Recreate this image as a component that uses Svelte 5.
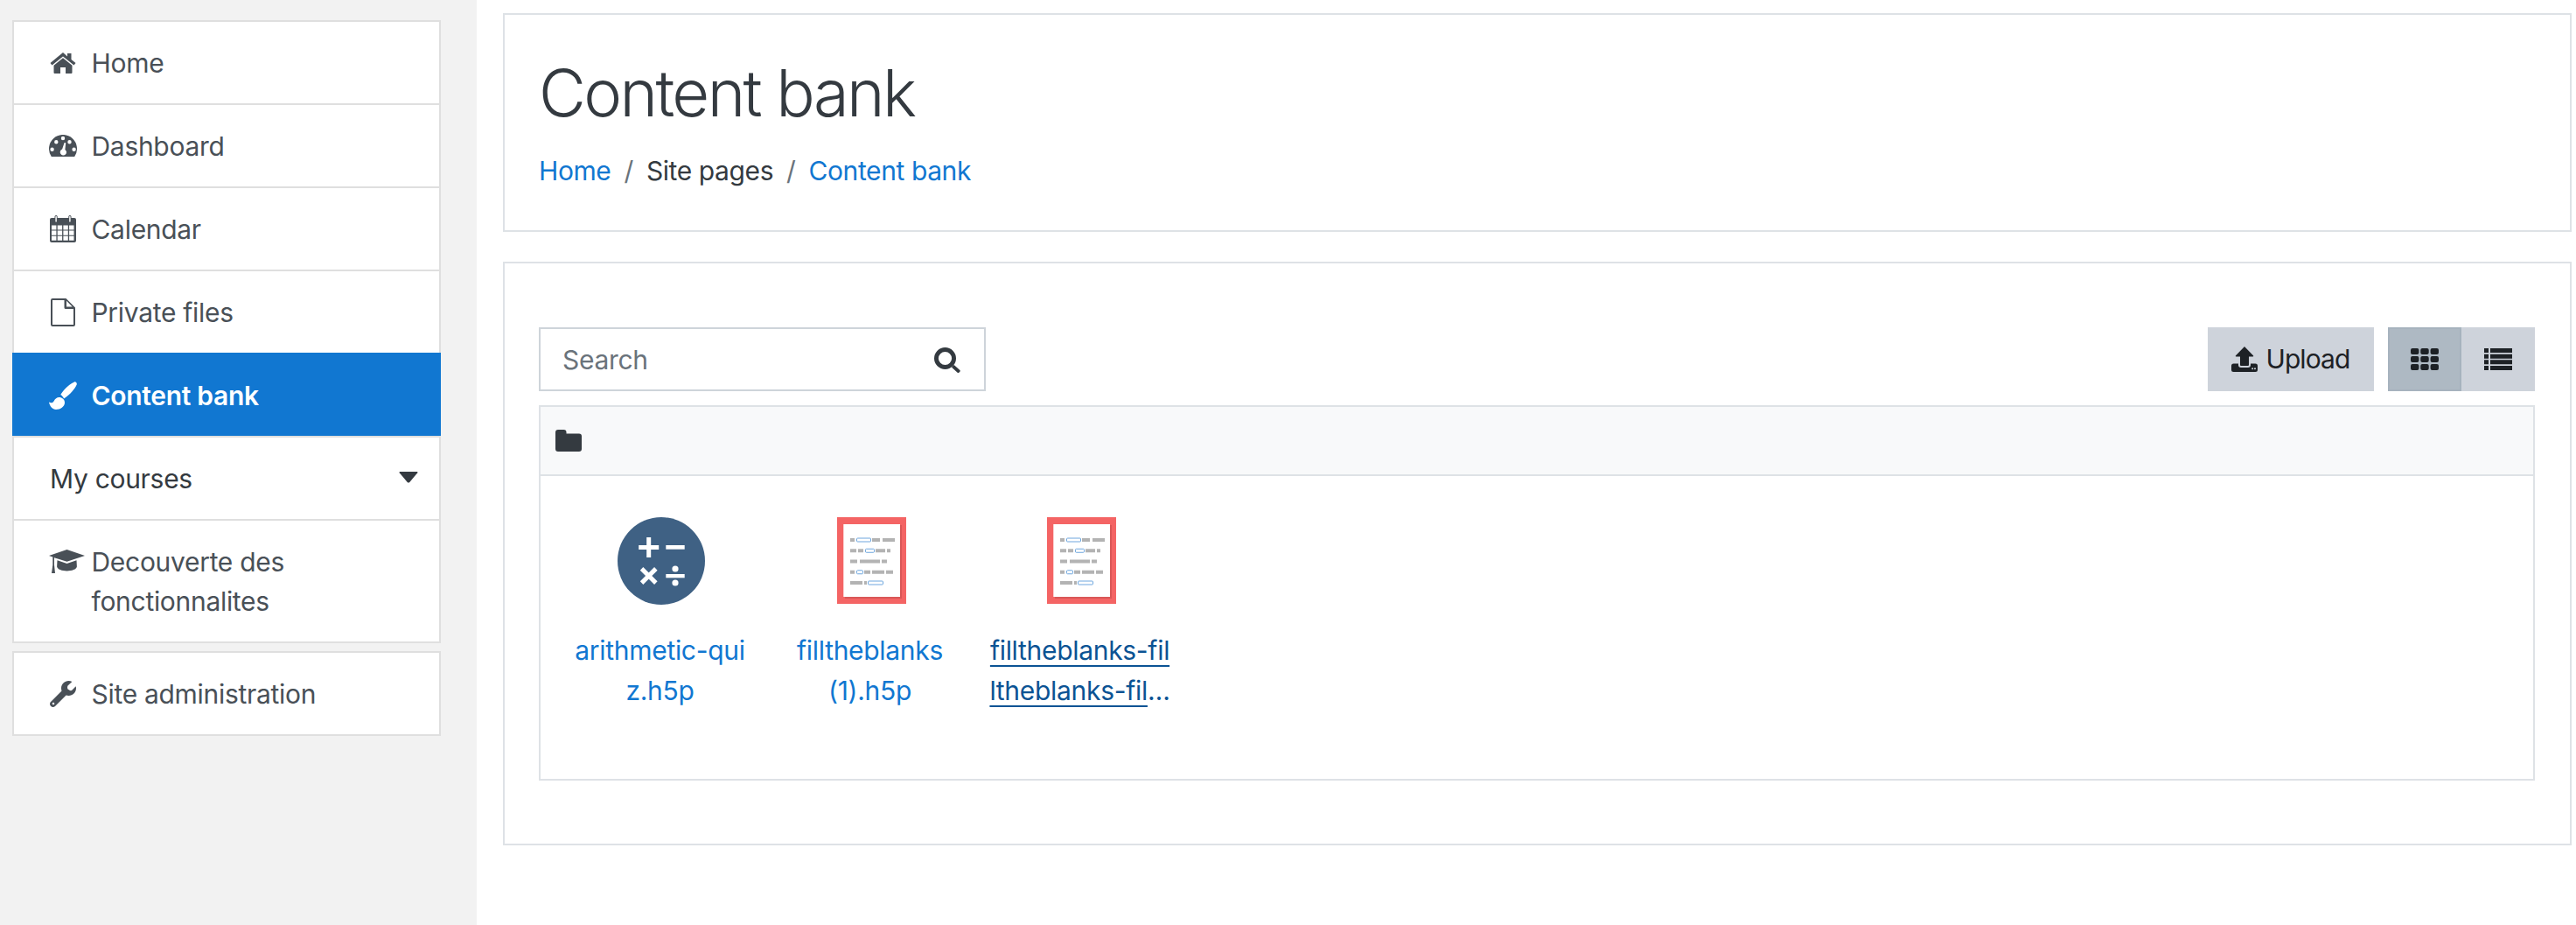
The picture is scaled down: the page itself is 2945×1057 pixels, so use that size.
<script>
    const circle = (x, y, r) => `M${x - r} ${y}a${r} ${r} 0 1 0 ${2 * r} 0a${r} ${r} 0 1 0 ${-2 * r} 0z`;
    const rrect = (x, y, w, h, r) =>
        `M${x + r} ${y}h${w - 2 * r}q${r} 0 ${r} ${r}v${h - 2 * r}q0 ${r} ${-r} ${r}h${-(w - 2 * r)}q${-r} 0 ${-r} ${-r}v${-(h - 2 * r)}q0 ${-r} ${r} ${-r}z`;

    let calCells = "";
    for (let r = 0; r < 3; r++) {
        for (let c = 0; c < 4; c++) {
            calCells += `M${2 + c * 6.7} ${11.5 + r * 6.1}h5.4v5.1h-5.4z`;
        }
    }

    let thCells = "";
    for (let r = 0; r < 3; r++) {
        for (let c = 0; c < 3; c++) {
            thCells += rrect(c * 11.3, r * 9, 9.4, 7, 2);
        }
    }

    let listRows = "";
    for (let r = 0; r < 4; r++) {
        listRows += `M0 ${r * 6.67}h5v5h-5zM7 ${r * 6.67}h25v5h-25z`;
    }

    const icons = {
        home: {
            w: 32, h: 24,
            d: "M16 0 1.500 12l2 2.500L16 4.500l12.500 10 2-2.500-5-4V1H21v3.500zM16 6.200 5.500 14.800V23q0 1 1 1H13v-7h6v7h6.500q1 0 1-1v-8.200z",
        },
        dashboard: {
            w: 32, h: 25,
            d: "M2.800 25A16 16 0 1 1 29.200 25z" + circle(3.6, 16.7, 2.2) + circle(8.3, 8.3, 2.2) + circle(16, 4, 2.2) + circle(23.5, 8.3, 2.2) + circle(28.6, 16.7, 2.2) + "M17.600 9l-2.500 7.500a3.600 3.600 0 1 0 3.300.4l.8-7.700z",
        },
        calendar: {
            w: 30, h: 31,
            d: "M2 3h3.500V1.600a1.600 1.600 0 0 1 3.200 0V3h12.600V1.600a1.600 1.600 0 0 1 3.200 0V3H28q2 0 2 2v24q0 2-2 2H2q-2 0-2-2V5q0-2 2-2zM6.400 1.600V7a.7.7 0 0 0 1.400 0V1.600a.7.7 0 0 0-1.400 0zM22.200 1.600V7a.7.7 0 0 0 1.400 0V1.600a.7.7 0 0 0-1.400 0z" + calCells,
        },
        file: {
            w: 28, h: 32,
            d: "M2 0h15.500l10.500 10.500V30q0 2-2 2H2q-2 0-2-2V2q0-2 2-2zM2 2v28h24V12h-9q-1.500 0-1.500-1.500V2zM18 2.800V9.500h6.700z",
        },
        brush: {
            w: 32, h: 32,
            d: "M29 .4C21 4 15.500 11 13.300 15c1.500 1 3 2.500 3.700 4.500C24 15 30 8 31.700 3.500c.6-2-1-3.500-2.700-3.100zM0 23.500c1.500 1 4 1.500 5.500-1C7 19.500 9 18 11.500 18c3.500 0 6.500 2.500 6.500 6 0 4.500-5 8-10 8-4 0-7.200-4-8-8.500z",
        },
        cap: {
            w: 41, h: 27,
            d: "M20.500 0 41 7 20.500 13.800 6 9.200V17.500L7 27H3l1.300-9.500V8.600L0 7zM9.500 12.200l11 3.700 11-3.700.4 7.400c-.4 3.200-5.800 4.800-11.400 4.800S9.500 22.800 9.100 19.600z",
        },
        wrench: {
            w: 30, h: 30,
            d: "M29.700 6.300c.2.800.3 1.700.3 2.300C30 13.400 26.200 17 21.500 17c-1 0-2-.2-3-.5L6 29c-1.300 1.300-3.500 1.300-4.800 0l-.2-.2c-1.300-1.300-1.300-3.500 0-4.800l12.500-12.500c-.3-1-.5-2-.5-3C13 3.800 16.800 0 21.500 0c1.300 0 2.700.3 3.900.9L20.500 5.500q-1 2 0 4l2.500 1.500q1.500.5 2.500-.5z" + circle(4, 26, 1.3),
        },
        search: {
            w: 30, h: 29,
            d: circle(12.5, 12.5, 12.5) + circle(12.5, 12.5, 7.6) + "M20 22.700l2.700-2.700 6.700 6c1.200 1.300-1.500 4-2.800 2.800z",
        },
        folder: {
            w: 30, h: 25,
            d: "M3 0h6.500q3 0 3 3v1.500H27q3 0 3 3V22q0 3-3 3H3q-3 0-3-3V3q0-3 3-3z",
        },
        upload: {
            w: 30, h: 29,
            d: "M15 0 25.200 10.500q.3 1-.7 1H20V21q0 1-1 1h-8q-1 0-1-1v-9.500H5.500q-1 0-.7-1zM0 22q0-2.500 2.500-2.500H8V21q0 3 3 3h8q3 0 3-3v-1.500h5.500Q30 19.500 30 22v4.500Q30 29 27.500 29h-25Q0 29 0 26.500z" + circle(24.2, 25.2, 1) + circle(27, 25.2, 1),
        },
        th: { w: 32, h: 25, d: thCells },
        list: { w: 32, h: 25, d: listRows },
    };

    const navMain = [
        { label: "Home", icon: "home" },
        { label: "Dashboard", icon: "dashboard" },
        { label: "Calendar", icon: "calendar" },
        { label: "Private files", icon: "file" },
        { label: "Content bank", icon: "brush", active: true },
        { label: "My courses", caret: true },
        { label: "Decouverte des fonctionnalites", icon: "cap", wide: true },
    ];

    // gray runs and blue blanks of the fill-the-blanks thumbnail, in px from its left edge
    const blankRows = [
        [[15, 5], [22, 16, 1], [40, 9], [52, 14]],
        [[15, 7], [24, 6], [32, 10, 1], [44, 11], [57, 4]],
        [[15, 8], [26, 23], [51, 6]],
        [[15, 5], [22, 7, 1], [31, 7], [40, 14], [56, 8]],
        [[15, 14], [31, 3], [35, 17, 1]],
    ];

    const files = [
        { lines: ["arithmetic-qui", "z.h5p"], thumb: "math" },
        { lines: ["filltheblanks", "(1).h5p"], thumb: "blanks" },
        { lines: ["filltheblanks-fil", "ltheblanks-fil"], thumb: "blanks", more: true, hover: true },
    ];
</script>

{#snippet icon(name, cls = "")}
    <svg class={cls} width={icons[name].w} height={icons[name].h} viewBox="0 0 {icons[name].w} {icons[name].h}" fill="currentColor">
        <path fill-rule="evenodd" d={icons[name].d} />
    </svg>
{/snippet}

<div class="page">
    <aside class="sidebar">
        <nav class="nav-card">
            {#each navMain as item}
                <a class="nav-row" class:active={item.active} class:plain={item.caret} class:wide={item.wide} href="#top">
                    {#if item.icon}
                        <span class="nav-icon">{@render icon(item.icon)}</span>
                    {/if}
                    <span class="nav-label">{item.label}</span>
                    {#if item.caret}
                        <svg class="caret" width="22" height="13" viewBox="0 0 22 13" fill="currentColor">
                            <path d="M1.500 0h19q1.500 0 .8 1.300L12.300 12q-1.300 1.200-2.600 0L.7 1.300Q0 0 1.500 0z" />
                        </svg>
                    {/if}
                </a>
            {/each}
        </nav>
        <nav class="nav-card second">
            <a class="nav-row" href="#top">
                <span class="nav-icon">{@render icon("wrench")}</span>
                <span class="nav-label">Site administration</span>
            </a>
        </nav>
    </aside>

    <main class="main">
        <header class="card head">
            <h1>Content bank</h1>
            <ol class="crumbs">
                <li><a href="#top">Home</a></li>
                <li class="sep">/</li>
                <li>Site pages</li>
                <li class="sep">/</li>
                <li><a href="#top">Content bank</a></li>
            </ol>
        </header>

        <section class="card bank">
            <div class="actions">
                <div class="search">
                    <input type="text" placeholder="Search" />
                    {@render icon("search", "search-icon")}
                </div>
                <button class="btn upload">{@render icon("upload")}<span>Upload</span></button>
                <div class="toggle">
                    <button class="btn on" aria-label="Grid view">{@render icon("th")}</button>
                    <button class="btn" aria-label="List view">{@render icon("list")}</button>
                </div>
            </div>

            <div class="files">
                <div class="files-head">{@render icon("folder")}</div>
                <div class="grid">
                    {#each files as file}
                        <a class="file" class:hover={file.hover} href="#top">
                            {#if file.thumb === "math"}
                                <svg class="thumb math" width="102" height="102" viewBox="-51 -51 102 102">
                                    <circle r="50" fill="#3f6184" />
                                    <g fill="#fff">
                                        <path d="M-16.800-27h5v9h9v5h-9v9h-5v-9h-9v-5h9z" />
                                        <path d="M5.300-18h21.400v4.700H5.300z" />
                                        <g transform="translate(-14.300 17) rotate(45)">
                                            <rect x="-11.500" y="-2.500" width="23" height="5" />
                                            <rect x="-2.500" y="-11.500" width="5" height="23" />
                                        </g>
                                        <path d="M5.300 15h21.400v4.300H5.300z" />
                                        <circle cx="16" cy="9" r="3.600" />
                                        <circle cx="16" cy="25" r="3.600" />
                                    </g>
                                </svg>
                            {:else}
                                <svg class="thumb" width="79" height="99" viewBox="0 0 79 99">
                                    <rect width="79" height="99" fill="#f46464" />
                                    <path d="M72 9h2v84H9v-2h63z" fill="#d95757" />
                                    <rect x="7.300" y="8" width="64.700" height="83" fill="#fff" />
                                    {#each blankRows as row, r}
                                        {#each row as run}
                                            {#if run[2]}
                                                <rect x={run[0] + 0.5} y={24 + r * 12.25} width={run[1]} height="4" rx="1" fill="#fff" stroke="#6ea6de" />
                                            {:else}
                                                <rect x={run[0]} y={24 + r * 12.25} width={run[1]} height="4" fill="#b3b3b3" />
                                            {/if}
                                        {/each}
                                    {/each}
                                </svg>
                            {/if}
                            <span class="name">
                                {#each file.lines as line, i}
                                    <span class="line"><span class="ink">{line}</span>{#if file.more && i === 1}…{/if}</span>
                                {/each}
                            </span>
                        </a>
                    {/each}
                </div>
            </div>
        </section>
    </main>
</div>

<style>
    :global(body) {
        margin: 0;
        background: #fff;
        font-family: Inter, "Liberation Sans", sans-serif;
        font-size: 30px;
        line-height: 45px;
        color: #343a40;
    }

    a {
        color: #1177d1;
        text-decoration: none;
    }

    .page {
        display: flex;
        min-height: 1057px;
    }

    .sidebar {
        width: 545px;
        box-sizing: border-box;
        flex: none;
        padding: 23px 41px 0 14px;
        background: #f2f2f2;
    }

    .nav-card {
        display: flex;
        flex-direction: column;
        background: #fff;
        border: 2px solid #dfdfdf;
    }

    .nav-card.second {
        margin-top: 9px;
    }

    .nav-row {
        display: flex;
        align-items: flex-start;
        padding: 25px 0 23px 40px;
        border-bottom: 2px solid #dfdfdf;
        color: #495057;
        letter-spacing: -0.3px;
    }

    .nav-row:last-child {
        border-bottom: 0;
    }

    .nav-row.active {
        margin: -2px -2px 0;
        padding: 27px 0 23px 42px;
        background: #1177d1;
        color: #fff;
        font-weight: 600;
    }

    .nav-row.plain {
        justify-content: space-between;
        padding-left: 41px;
        padding-right: 24px;
        color: #343a40;
    }

    .nav-icon {
        flex: none;
        display: flex;
        justify-content: center;
        align-items: center;
        width: 32px;
        height: 45px;
        margin: -1px 16.5px 0 0;
    }

    .nav-row.wide .nav-icon {
        width: 41px;
        margin-right: 7.5px;
    }

    .caret {
        margin-top: 14px;
    }

    .main {
        flex: 1;
        min-width: 0;
        padding: 15px 5px 0 30px;
    }

    .card {
        background: #fff;
        border: 2px solid #dee2e6;
    }

    .head {
        height: 250px;
        box-sizing: border-box;
        padding: 44px 39px 0;
    }

    h1 {
        margin: 0;
        font-size: 74px;
        line-height: 90px;
        font-weight: 300;
        letter-spacing: -2.6px;
    }

    .crumbs {
        display: flex;
        gap: 15px;
        margin: 22px 0 0;
        padding: 0;
        list-style: none;
        letter-spacing: -0.4px;
    }

    .sep {
        color: #6a737b;
    }

    .bank {
        margin-top: 34px;
        padding: 73px 40px 72px 39px;
    }

    .actions {
        display: flex;
        gap: 16px;
        margin-bottom: 16px;
    }

    .search {
        position: relative;
        display: flex;
        width: 511px;
        margin-right: auto;
    }

    input {
        width: 100%;
        height: 73px;
        box-sizing: border-box;
        padding: 0 70px 0 25px;
        border: 2px solid #ced4da;
        border-radius: 0;
        outline: 0;
        font: inherit;
        letter-spacing: -0.3px;
        color: #495057;
    }

    input::placeholder {
        color: #6a737b;
    }

    :global(.search-icon) {
        position: absolute;
        top: 23px;
        right: 29px;
    }

    .btn {
        display: flex;
        align-items: center;
        justify-content: center;
        height: 73px;
        padding: 0;
        border: 0;
        background: #ced3db;
        color: #1d2125;
        font: inherit;
    }

    .upload {
        width: 190px;
        gap: 9px;
        letter-spacing: -0.9px;
    }

    .toggle {
        display: flex;
    }

    .toggle .btn {
        width: 84px;
    }

    .toggle .btn.on {
        background: #aeb9c3;
        box-shadow: inset 0 0 0 2px #a7b3be;
    }

    .files {
        border: 2px solid #dee2e6;
    }

    .files-head {
        display: flex;
        align-items: center;
        height: 79px;
        box-sizing: border-box;
        padding-left: 17px;
        background: #f8f9fa;
        border-bottom: 2px solid #dee2e6;
    }

    .grid {
        display: flex;
        padding: 47px 0 78px 18px;
    }

    .file {
        display: flex;
        flex-direction: column;
        align-items: center;
        width: 240px;
        text-align: center;
    }

    .thumb {
        display: block;
        flex: none;
    }

    .thumb.math {
        margin: -1.5px 0;
    }

    .name {
        margin: 30px 0 0 -3px;
        line-height: 46px;
        letter-spacing: -0.3px;
    }

    .line {
        display: block;
        white-space: nowrap;
    }

    .file.hover {
        color: #0b5394;
    }

    .file.hover .ink {
        text-decoration: underline;
        text-decoration-thickness: 2px;
        text-underline-offset: 6px;
    }
</style>
